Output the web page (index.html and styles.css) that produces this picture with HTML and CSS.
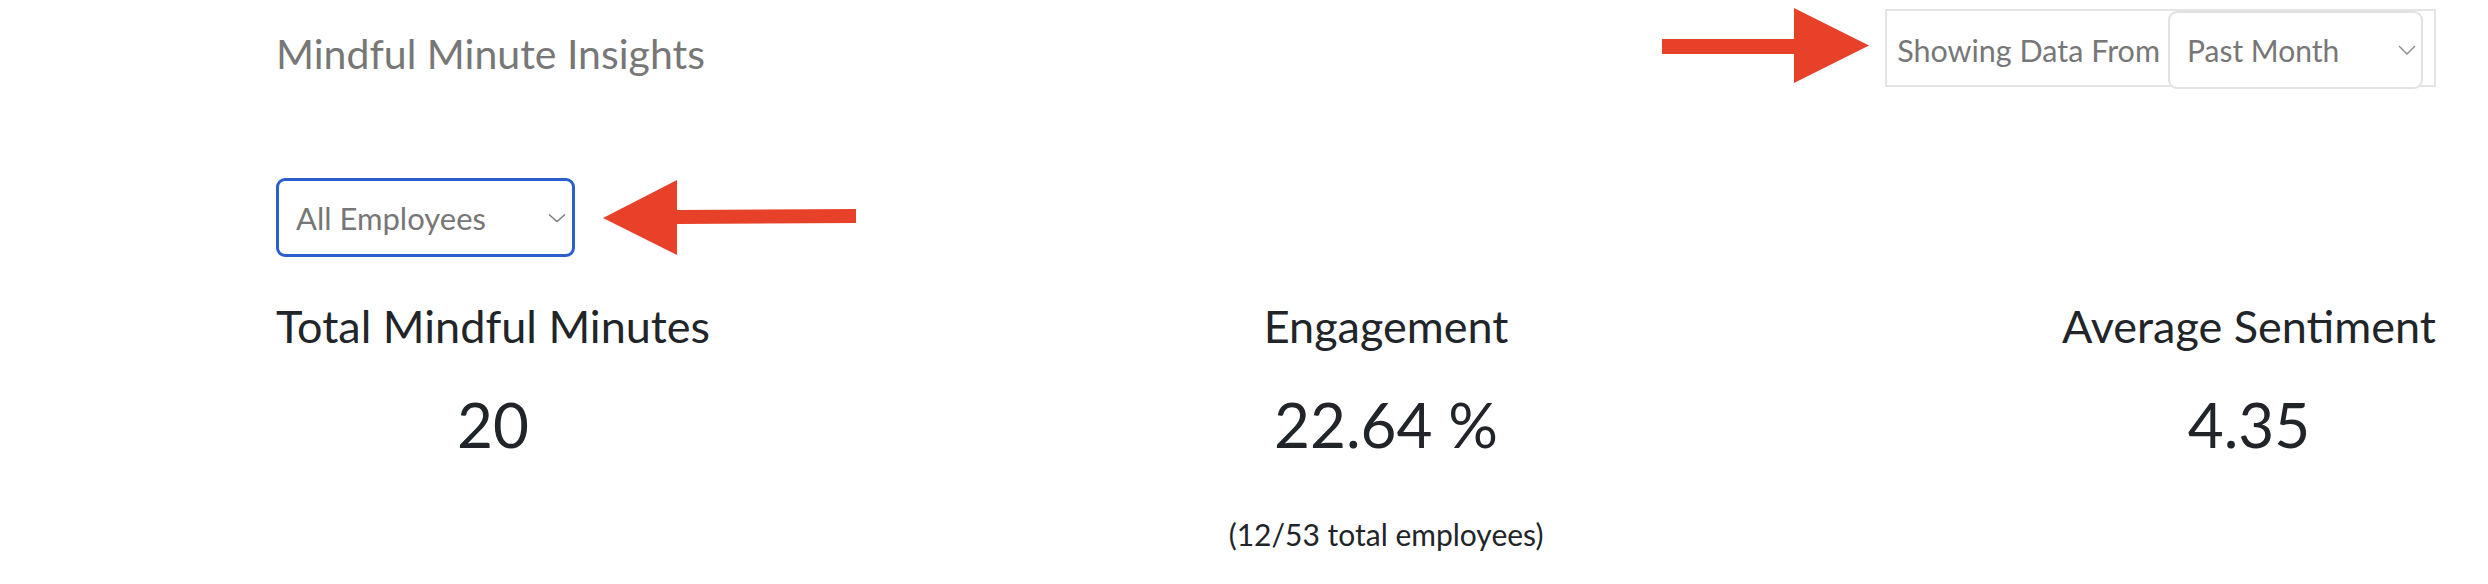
FILE: index.html
```html
<!DOCTYPE html>
<html lang="en">
<head>
<meta charset="utf-8">
<title>Mindful Minute Insights</title>
<link rel="stylesheet" href="styles.css">
</head>
<body>
<div class="page">
  <header class="header">
    <h1 class="title">Mindful Minute Insights</h1>
    <div class="range-group">
      <svg class="arrow arrow-right" width="207" height="75" viewBox="0 0 207 75" aria-hidden="true">
        <path d="M0 31 H132 V0 L207 37.5 L132 75 V46 H0 Z" fill="#e8412a"/>
      </svg>
      <div class="range-box">
        <span class="range-label">Showing Data From</span>
        <div class="select-wrap range-select">
          <select class="select">
            <option>Past Month</option>
          </select>
          <svg class="chevron" width="18" height="10" viewBox="0 0 18 10" aria-hidden="true">
            <path d="M1 1 L9 9 L17 1" fill="none" stroke="#8a8a8a" stroke-width="1.4"/>
          </svg>
        </div>
      </div>
    </div>
  </header>

  <div class="filter-row">
    <div class="select-wrap employee-select">
      <select class="select">
        <option>All Employees</option>
      </select>
      <svg class="chevron" width="18" height="9" viewBox="0 0 18 9" aria-hidden="true">
        <path d="M1 1 L9 8 L17 1" fill="none" stroke="#7a7a7a" stroke-width="1.4"/>
      </svg>
    </div>
    <svg class="arrow arrow-left" width="253" height="75" viewBox="0 0 253 75" aria-hidden="true">
      <path d="M0 38 L74 0 V30 L253 29 V43 L74 44 V75 Z" fill="#e8412a"/>
    </svg>
  </div>

  <section class="stats">
    <div class="stat">
      <div class="stat-label">Total Mindful Minutes</div>
      <div class="stat-value">20</div>
    </div>
    <div class="stat">
      <div class="stat-label">Engagement</div>
      <div class="stat-value">22.64 %</div>
      <div class="stat-sub">(12/53 total employees)</div>
    </div>
    <div class="stat">
      <div class="stat-label">Average Sentiment</div>
      <div class="stat-value">4.35</div>
    </div>
  </section>
</div>
</body>
</html>
```

FILE: styles.css
```css
* {
  box-sizing: border-box;
}

html, body {
  margin: 0;
  padding: 0;
  background: #ffffff;
}

body {
  font-family: "Lato", "Open Sans", sans-serif;
  color: #212529;
}

.page {
  padding: 0 52px 0 276px;
}

.header {
  display: flex;
  justify-content: space-between;
  align-items: flex-start;
  padding-top: 8px;
}

.title {
  margin: 22px 0 0 0;
  font-size: 41px;
  line-height: 48px;
  font-weight: 400;
  color: #777777;
}

.range-group {
  display: flex;
  align-items: flex-start;
  gap: 16px;
}

.arrow {
  display: block;
  flex: none;
}

.range-box {
  display: flex;
  align-items: flex-start;
  height: 78px;
  margin-top: 1px;
  border: 2px solid #e4e4e4;
  padding-right: 11px;
}

.range-label {
  padding: 2px 8px 0 10px;
  font-size: 30.5px;
  line-height: 74px;
  color: #777777;
  white-space: nowrap;
}

.select-wrap {
  position: relative;
  flex: none;
}

.select {
  display: block;
  width: 100%;
  height: 100%;
  margin: 0;
  -webkit-appearance: none;
  appearance: none;
  background: #ffffff;
  font-family: "Lato", "Open Sans", sans-serif;
  color: #777777;
  outline: none;
}

.chevron {
  position: absolute;
  top: 50%;
  transform: translateY(-50%);
  pointer-events: none;
}

.range-select {
  width: 255px;
  height: 78px;
}

.range-select .select {
  border: 2px solid #e2e2e2;
  border-radius: 9px;
  font-size: 30px;
  padding: 0 40px 0 17px;
}

.range-select .chevron {
  right: 7px;
}

.filter-row {
  display: flex;
  align-items: center;
  gap: 28px;
  margin-top: 91px;
}

.employee-select {
  width: 299px;
  height: 79px;
}

.employee-select .select {
  border: 3px solid #2b5fcb;
  border-radius: 9px;
  font-size: 31px;
  padding: 0 40px 0 17px;
}

.employee-select .chevron {
  right: 9px;
}

.stats {
  display: flex;
  justify-content: space-between;
  align-items: flex-start;
  margin-top: 43px;
}

.stat {
  text-align: center;
}

.stat-label {
  font-size: 45px;
  line-height: 53px;
  white-space: nowrap;
}

.stat-value {
  margin-top: 33px;
  font-size: 62px;
  line-height: 77px;
  white-space: nowrap;
}

.stat-sub {
  margin-top: 53px;
  font-size: 30px;
  line-height: 37px;
  white-space: nowrap;
}
```
